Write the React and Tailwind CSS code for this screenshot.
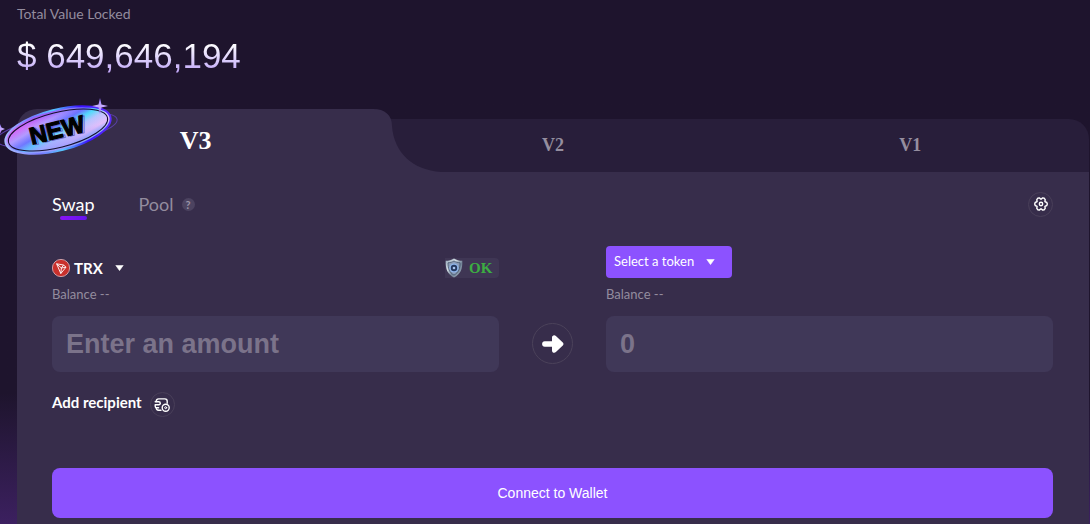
import React, { useState } from 'react';

const versions = ['V2', 'V1'];

function Sparkle({ x, y, size }) {
    const s = size;
    return (
        <path
            d={`M${x} ${y - s}L${x + 1.5} ${y - 1.5}L${x + s} ${y}L${x + 1.5} ${y + 1.5}L${x} ${y + s}L${x - 1.5} ${y + 1.5}L${x - s} ${y}L${x - 1.5} ${y - 1.5}Z`}
            fill="url(#sparkle)"
        />
    );
}

// Holographic sticker that hangs over the corner of the first tab
function NewSticker() {
    return (
        <svg className="absolute -left-[17px] -top-3 pointer-events-none" width="120" height="60" viewBox="0 0 120 60" aria-label="New">
            <defs>
                <linearGradient id="holo" x1="0.1" y1="0" x2="0.9" y2="1">
                    <stop offset="0" stopColor="#9a5cff" />
                    <stop offset="0.15" stopColor="#d860f5" />
                    <stop offset="0.3" stopColor="#b49cff" />
                    <stop offset="0.42" stopColor="#6a74ff" />
                    <stop offset="0.52" stopColor="#52dcfb" />
                    <stop offset="0.62" stopColor="#b9c8ff" />
                    <stop offset="0.76" stopColor="#ecc4fa" />
                    <stop offset="0.9" stopColor="#6fb8f8" />
                    <stop offset="1" stopColor="#5a45f5" />
                </linearGradient>
                <linearGradient id="shade" x1="0" y1="0" x2="0" y2="1">
                    <stop offset="0" stopColor="#4b3cf8" stopOpacity="0.5" />
                    <stop offset="0.25" stopColor="#8a6cff" stopOpacity="0" />
                    <stop offset="0.6" stopColor="#8a8cff" stopOpacity="0.1" />
                    <stop offset="1" stopColor="#7a8cff" stopOpacity="0.8" />
                </linearGradient>
                <linearGradient id="rim" x1="0" y1="0" x2="1" y2="0">
                    <stop offset="0" stopColor="#a9bcff" />
                    <stop offset="0.3" stopColor="#7578ff" />
                    <stop offset="0.5" stopColor="#55c8ff" />
                    <stop offset="0.75" stopColor="#3a10ff" />
                    <stop offset="1" stopColor="#5d2cff" />
                </linearGradient>
                <linearGradient id="sparkle" x1="0" y1="0" x2="0" y2="1">
                    <stop offset="0" stopColor="#8c6cff" />
                    <stop offset="0.5" stopColor="#c9b0ff" />
                    <stop offset="1" stopColor="#9a50e8" />
                </linearGradient>
            </defs>
            <ellipse cx="57" cy="33" rx="61" ry="14" transform="rotate(-10 57 33)" fill="none" stroke="#5a3fa8" strokeWidth="1" />
            <g transform="rotate(-14 58 33)">
                <ellipse cx="58" cy="33" rx="54" ry="20.5" fill="url(#holo)" />
                <ellipse cx="58" cy="33" rx="54" ry="20.5" fill="url(#shade)" stroke="url(#rim)" strokeWidth="2" />
                <ellipse cx="58" cy="33" rx="51" ry="17.5" fill="none" stroke="#15102c" strokeWidth="1" />
            </g>
            <g transform="rotate(-14 58 33)" fontFamily="'Liberation Sans', sans-serif" fontWeight="700" fontSize="24" textAnchor="middle">
                <text x="59" y="42" fill="none" stroke="#6b5ab8" strokeWidth="0.8">NEW</text>
                <text x="57" y="41" fill="#000" stroke="#000" strokeWidth="1.2">NEW</text>
            </g>
            <Sparkle x={100} y={9} size={8} />
            <Sparkle x={0} y={32} size={5} />
        </svg>
    );
}

function TronIcon() {
    return (
        <svg width="18" height="18" viewBox="0 0 18 18" aria-hidden="true">
            <circle cx="9" cy="9" r="8.6" fill="#c9302c" stroke="#d9a9b0" strokeWidth="0.9" />
            <path
                d="M4.6 4.8 11.6 6l2.4 2.2-5.2 6.3ZM4.6 4.8 9.4 9l-.6 5.5M9.4 9l2.2-3M9.4 9 14 8.2"
                fill="none"
                stroke="#fff"
                strokeWidth="0.9"
                strokeLinejoin="round"
            />
        </svg>
    );
}

function ShieldIcon() {
    return (
        <svg className="shrink-0" width="18" height="20" viewBox="0 0 18 20" aria-hidden="true">
            <defs>
                <linearGradient id="steel" x1="0" y1="0" x2="1" y2="1">
                    <stop offset="0" stopColor="#8fa3b5" />
                    <stop offset="0.35" stopColor="#d3dde5" />
                    <stop offset="0.6" stopColor="#718396" />
                    <stop offset="1" stopColor="#a9b6c3" />
                </linearGradient>
            </defs>
            <path d="M9 .4c2.6 1.7 5.2 2.3 8.3 2.4.3 8-1.5 13.4-8.3 16.8C2.2 16.2.4 10.8.7 2.8 3.8 2.7 6.4 2.1 9 .4Z" fill="url(#steel)" />
            <path d="M9 3c1.9 1.1 3.8 1.6 6 1.8 0 5.9-1.3 9.7-6 12.3C4.3 14.5 3 10.7 3 4.8 5.2 4.6 7.1 4.1 9 3Z" fill="#8b9db8" stroke="#43536b" strokeWidth="0.8" />
            <circle cx="9" cy="10" r="4.6" fill="#8eb4ea" />
            <circle cx="9" cy="10" r="3.2" fill="#24385f" />
            <circle cx="9" cy="10" r="1.3" fill="#a9c4ee" />
        </svg>
    );
}

function Caret() {
    return (
        <svg width="9" height="6" viewBox="0 0 9 6" aria-hidden="true">
            <path d="M.8.4h7.4L4.5 5.6Z" fill="#fff" stroke="#fff" strokeWidth="0.6" strokeLinejoin="round" />
        </svg>
    );
}

function GearIcon() {
    return (
        <svg width="14" height="14" viewBox="0 0 14 14" fill="none" stroke="#fff" strokeWidth="1.4" strokeLinejoin="round" aria-hidden="true">
            <path d="M3.7 1.3 5.3.9 7 2.3 8.7.9l1.6.4.9 1.3-.3 2 1.900.9.5 1.5-.5 1.5-1.9.9.3 2-.9 1.300-1.6.4L7 11.700l-1.7 1.400-1.600-.4-.9-1.300.3-2-1.900-.9L.7 7l.5-1.500 1.900-.9-.3-2Z" />
            <circle cx="7" cy="7" r="1.7" />
        </svg>
    );
}

function WalletIcon() {
    return (
        <svg width="16" height="14" viewBox="0 0 16 14" fill="none" stroke="#fff" strokeWidth="1.4" strokeLinecap="round" strokeLinejoin="round" aria-hidden="true">
            <path d="M13.2 5.2V3.2c0-1.5-.8-2.3-2.3-2.3H4.6C3.1.9 2.3 1.7 2.1 3.6M7 12.2H4.6c-1.5 0-2.4-.8-2.4-2.4" />
            <path d="M1.2 3.8h3.6c2 0 2 3 0 3H1.2v1.4c0 1.1.6 1.6 1.6 1.6h1.8" />
            <circle cx="11.7" cy="9.7" r="3.5" />
            <circle cx="11.7" cy="9.7" r="1" strokeWidth="1" />
        </svg>
    );
}

function ArrowIcon() {
    return (
        <svg width="22" height="18" viewBox="0 0 22 18" fill="#fff" aria-hidden="true">
            <path d="M2.8 6.2H10V2.6C10 .4 12.3-.5 13.9 1l6.9 6.5c.9.9.9 2.1 0 3L13.9 17c-1.6 1.5-3.9.6-3.9-1.6v-3.6H2.8C-.8 11.8-.8 6.2 2.8 6.2Z" />
        </svg>
    );
}

function SwapPanel() {
    const [amount, setAmount] = useState('');

    return (
        <div className="flex-1 bg-[#372d4b] pl-[35px] pr-9 pt-5 pb-1.5">
            {/* Swap / Pool switch */}
            <div className="flex h-6 items-center justify-between">
                <div className="flex items-center text-[18px] leading-6">
                    <button className="relative text-white">
                        Swap
                        <span className="absolute left-2 top-6 h-1 w-[27px] rounded-full bg-linear-to-r from-[#8a12f5] to-[#6414ef]" />
                    </button>
                    <button className="ml-11 text-[#938c9e]">Pool</button>
                    <button aria-label="About pools" className="ml-2 size-[13px] rounded-full bg-[#4c4360] text-center text-[11px] font-bold leading-[13px] text-[#9b94a7]">
                        ?
                    </button>
                </div>
                <button aria-label="Settings" className="flex size-[25px] items-center justify-center rounded-full border border-[#493f59]">
                    <GearIcon />
                </button>
            </div>

            <div className="mt-[30px] grid grid-cols-[1fr_107px_1fr]">
                <div>
                    <div className="flex h-8 items-end justify-between">
                        <button className="flex h-5 items-center text-[15px] font-bold text-white">
                            <TronIcon />
                            <span className="ml-1 mr-3">TRX</span>
                            <Caret />
                        </button>
                        <div className="flex h-5 w-[54px] items-center rounded-r bg-[#3f3654]">
                            <ShieldIcon />
                            <span className="ml-1.5 font-['Liberation_Serif',serif] text-[15px] font-bold text-[#3cae42]">OK</span>
                        </div>
                    </div>
                    <p className="mt-1.5 text-[13px] leading-5 text-[#938c9e]">Balance --</p>
                    <input
                        value={amount}
                        onChange={(e) => setAmount(e.target.value)}
                        aria-label="Amount to swap"
                        placeholder="Enter an amount"
                        className="mt-3 block h-14 w-full rounded-lg bg-[#403858] px-3.5 font-['Liberation_Sans',sans-serif] text-[27px] font-bold text-white outline-none placeholder:text-[#7b738a]"
                    />
                </div>

                <div className="flex items-end justify-center pb-2">
                    <button aria-label="Switch tokens" className="flex size-[41px] items-center justify-center rounded-full border border-[#4b425a]">
                        <ArrowIcon />
                    </button>
                </div>

                <div>
                    <button className="flex h-8 w-[126px] items-center rounded bg-[#8c52ff] pl-2 text-[13px] text-white">
                        <span className="mr-3">Select a token</span>
                        <Caret />
                    </button>
                    <p className="mt-1.5 text-[13px] leading-5 text-[#938c9e]">Balance --</p>
                    <input
                        aria-label="Amount received"
                        placeholder="0"
                        readOnly
                        className="mt-3 block h-14 w-full rounded-lg bg-[#403858] px-3.5 font-['Liberation_Sans',sans-serif] text-[27px] font-bold text-white outline-none placeholder:text-[#7b738a]"
                    />
                </div>
            </div>

            <div className="mt-5 flex items-start gap-2">
                <span className="text-[15px] font-bold leading-5 text-white">Add recipient</span>
                <button aria-label="Add recipient" className="flex size-[25px] items-center justify-center rounded-full border border-[#493f59]">
                    <WalletIcon />
                </button>
            </div>

            <button className="mt-[51px] h-[50px] w-full rounded-lg bg-[#8c52ff] font-['Liberation_Sans',sans-serif] text-[14px] text-white">
                Connect to Wallet
            </button>
        </div>
    );
}

function App() {
    return (
        <main className="flex min-h-screen flex-col bg-linear-to-b from-[#1e142d] from-75% to-[#3c2060] pl-[17px] pr-px font-[Lato,sans-serif]">
            <header className="pt-1">
                <h2 className="text-[14px] leading-5 text-[#938c9e]">Total Value Locked</h2>
                <p className="mt-3 w-fit bg-linear-to-b from-white from-20% to-[#b99af5] bg-clip-text font-['Liberation_Sans',sans-serif] text-[35px] leading-10 text-transparent">
                    $ 649,646,194
                </p>
            </header>

            {/* Version tabs */}
            <nav className="mt-[33px] grid grid-cols-3 items-end font-['Liberation_Serif',serif] font-bold">
                <div className="relative z-10">
                    <button className="h-[63px] w-full rounded-tl-[20px] bg-[#372d4b] text-[26px] text-white">V3</button>
                    <svg className="absolute left-full top-0 -ml-px" width="68" height="63" viewBox="0 0 68 63" aria-hidden="true">
                        <path d="M0 0C12 0 19 6 19 17C21 44 40 61 68 63H0Z" fill="#372d4b" />
                    </svg>
                    <NewSticker />
                </div>
                {versions.map((name) => (
                    <button key={name} className="h-[53px] bg-[#281e3a] text-[18px] text-[#958e9f] last:rounded-tr-[20px]">
                        {name}
                    </button>
                ))}
            </nav>

            <SwapPanel />
        </main>
    );
}

export default App;
